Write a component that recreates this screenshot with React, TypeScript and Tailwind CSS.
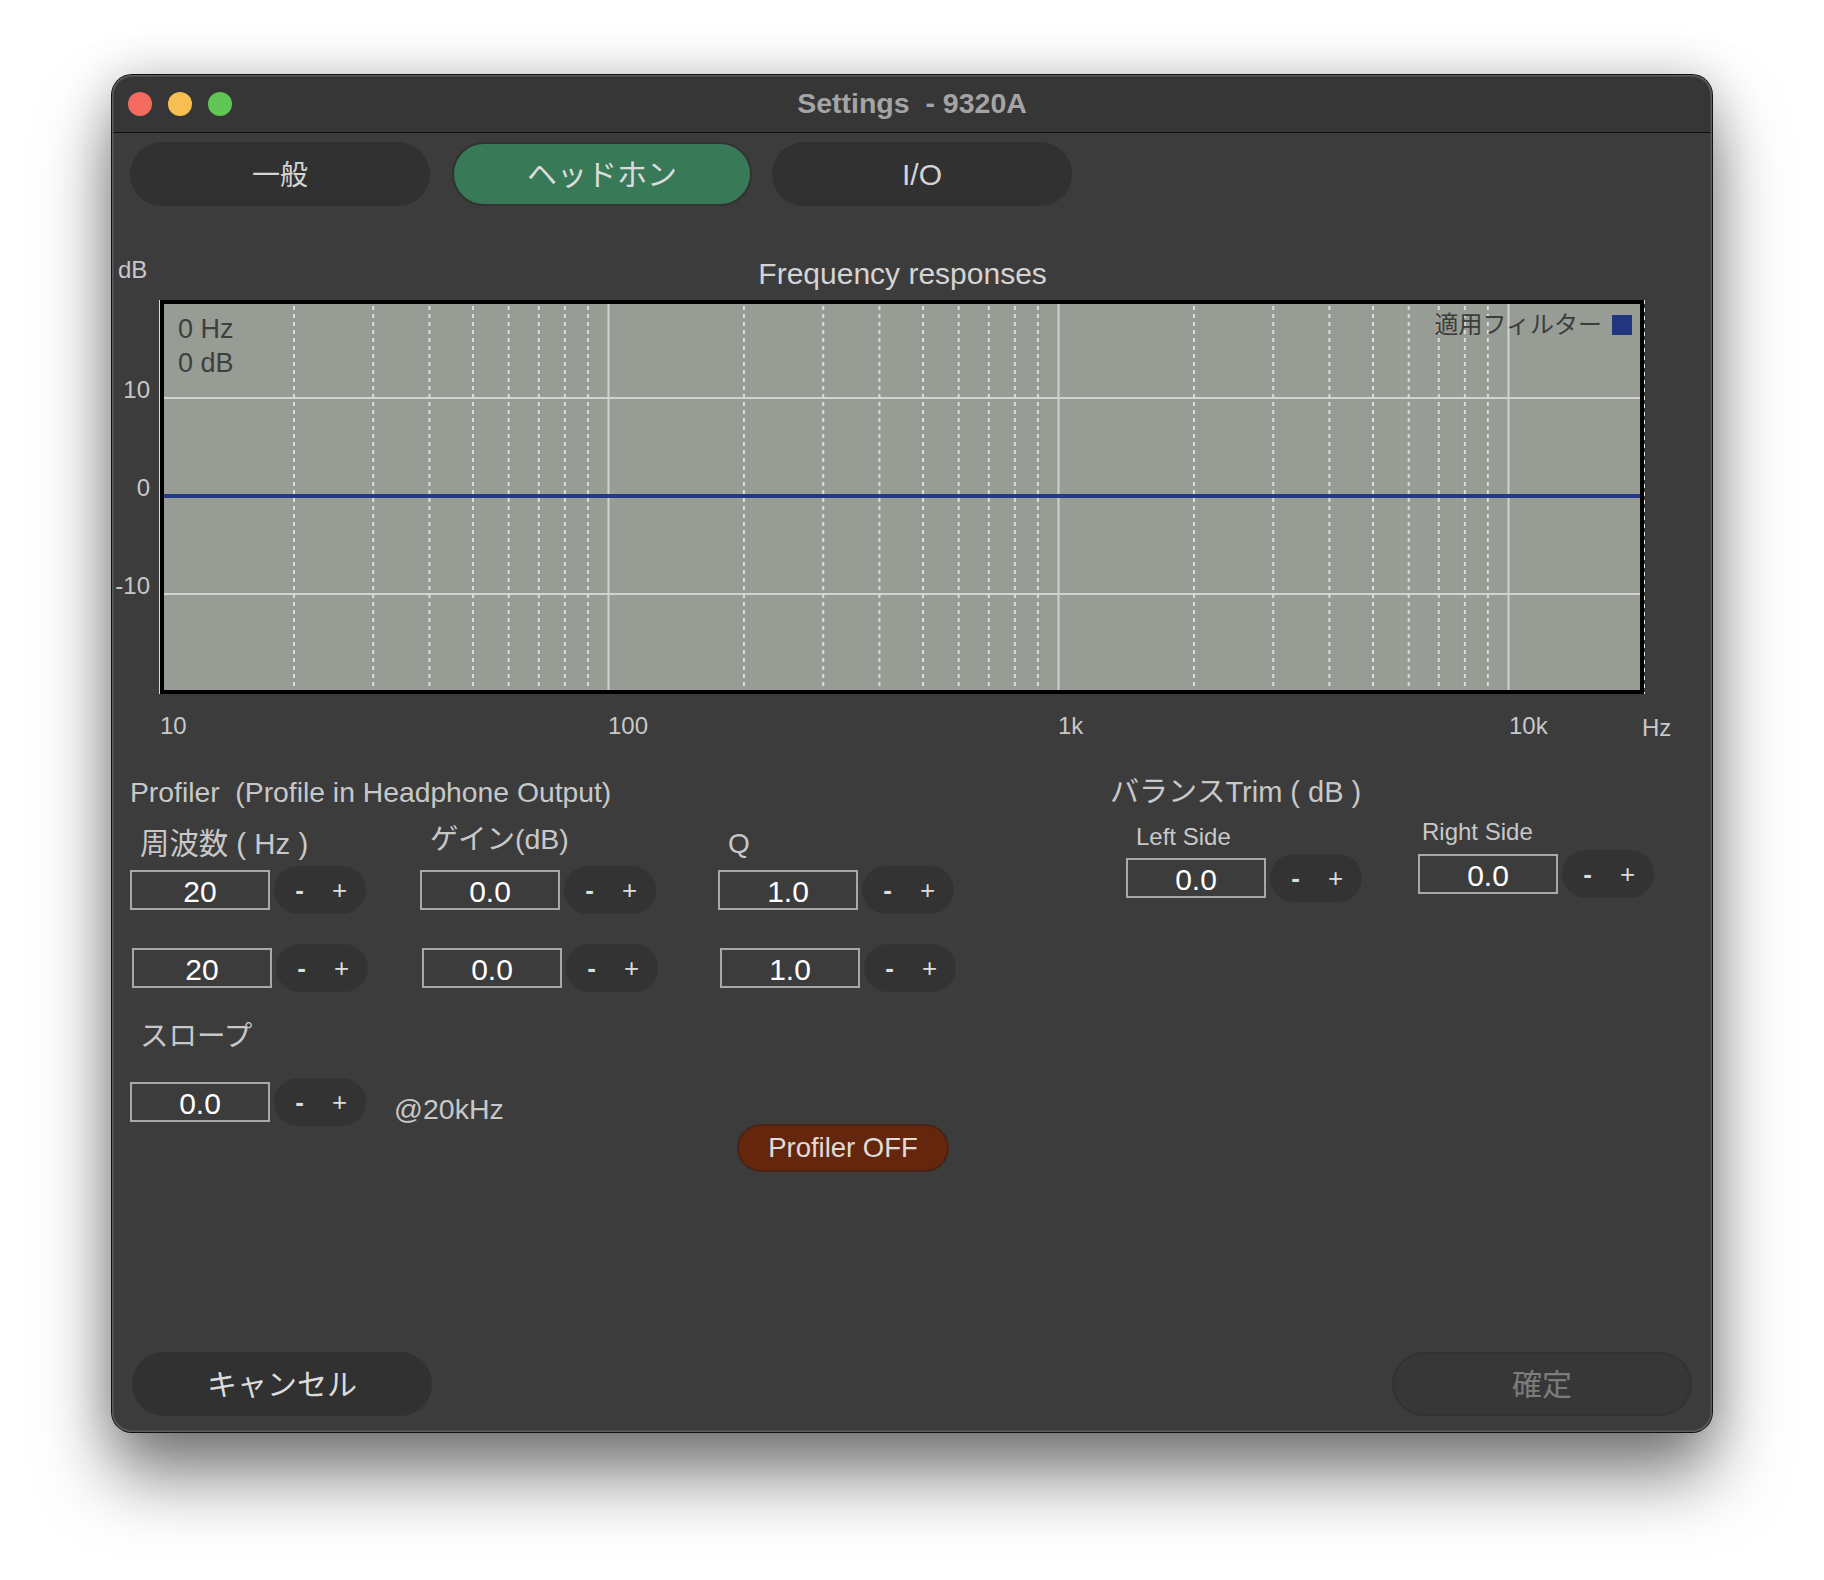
const font = { fontFamily: '"Liberation Sans", "Noto Sans CJK JP", sans-serif' };

const xLines: { x: number; solid: boolean }[] = [];
for (let d = 0; d < 4; d++) {
  for (let n = 1; n < 10; n++) {
    if (d === 3 && n > 2) break;
    xLines.push({ x: -5.5 + d * 450 + Math.log10(n) * 450, solid: n === 1 });
  }
}

function Stepper() {
  return (
    <div className="flex h-[48px] w-[92px] items-center justify-center rounded-full bg-[#333333] pr-[1px] text-[26px] text-[#dddddd]">
      <span className="w-[40px] text-center font-bold">-</span>
      <span className="w-[40px] text-center">+</span>
    </div>
  );
}

function Field({ value, className = "" }: { value: string; className?: string }) {
  return (
    <div className={`flex h-[48px] items-center gap-[4px] ${className}`}>
      <div className="flex h-[40px] w-[140px] items-center justify-center border-2 border-[#a8a8a8] pt-[2px] text-[30px] text-white">
        {value}
      </div>
      <Stepper />
    </div>
  );
}

function Pill({ label, className }: { label: string; className: string }) {
  return (
    <div className={`flex h-[64px] w-[300px] items-center justify-center rounded-full ${className}`}>
      {label}
    </div>
  );
}

function AxisLabel({ className, children }: { className: string; children: string }) {
  return <span className={`absolute text-[24px] leading-[28px] text-[#c8c8c8] ${className}`}>{children}</span>;
}

function Chart() {
  return (
    <div className="relative ml-[48px] h-[394px] w-[1484px]">
      <AxisLabel className="left-[-56px] top-[76px] w-[46px] text-right">10</AxisLabel>
      <AxisLabel className="left-[-56px] top-[174px] w-[46px] text-right">0</AxisLabel>
      <AxisLabel className="left-[-56px] top-[272px] w-[46px] text-right">-10</AxisLabel>
      <AxisLabel className="left-[0px] top-[412px]">10</AxisLabel>
      <AxisLabel className="left-[448px] top-[412px]">100</AxisLabel>
      <AxisLabel className="left-[898px] top-[412px]">1k</AxisLabel>
      <AxisLabel className="left-[1349px] top-[412px]">10k</AxisLabel>
      <AxisLabel className="left-[1482px] top-[414px]">Hz</AxisLabel>
      <div className="relative h-full w-full border-4 border-black bg-[#979d94]">
        <svg className="absolute left-0 top-0 overflow-visible" width="1476" height="386">
          {[94, 192, 290].map((y) => (
            <line key={y} x1="0" x2="1476" y1={y} y2={y} stroke="#d2d2d0" strokeWidth="2" />
          ))}
          {xLines.map(({ x, solid }) => {
            if (solid) {
              return x < 0 ? null : <line key={x} x1={x} x2={x} y1="0" y2="386" stroke="#d2d2d0" strokeWidth="2" />;
            }
            if (x > 1476) {
              return (
                <line key={x} x1="1480.5" x2="1480.5" y1="-4" y2="390" stroke="#e4e4e2" strokeWidth="1" strokeDasharray="4 4" />
              );
            }
            return <line key={x} x1={x} x2={x} y1="2" y2="386" stroke="#dcdcda" strokeWidth="2" strokeDasharray="4 4" />;
          })}
          <rect x="0" y="190" width="1476" height="4" fill="#26388a" />
          <line x1="-4.5" x2="-4.5" y1="-4" y2="390" stroke="#d8d8d8" strokeWidth="1" />
        </svg>
        <div className="absolute left-[14px] top-[8px] text-[27px] leading-[34px] text-[#3f3f3f]">
          <div>0 Hz</div>
          <div>0 dB</div>
        </div>
        <div className="absolute right-[8px] top-[10px] flex items-center gap-[10px] text-[24px] leading-[20px] text-[#3c3c3c]">
          <span className="pt-[1px]">適用フィルター</span>
          <div className="h-[20px] w-[20px] bg-[#22357f]" />
        </div>
      </div>
    </div>
  );
}

export default function App() {
  return (
    <div className="h-[1580px] w-[1824px] overflow-hidden bg-white pl-[112px] pt-[75px]" style={font}>
      <div className="relative flex h-[1357px] w-[1600px] flex-col rounded-[20px] bg-[#3c3c3c] shadow-[0_0_0_1px_#111111,0_44px_70px_rgba(0,0,0,0.5),0_0_50px_rgba(0,0,0,0.2)]">
        <div className="flex h-[58px] shrink-0 items-center rounded-t-[20px] border-b border-[#111111] bg-[#363636] pl-[16px]">
          <div className="flex gap-[16px]">
            <div className="h-[24px] w-[24px] rounded-full bg-[#f26b5e]" />
            <div className="h-[24px] w-[24px] rounded-full bg-[#f6bf4f]" />
            <div className="h-[24px] w-[24px] rounded-full bg-[#62c655]" />
          </div>
          <div className="ml-[280px] w-[800px] text-center text-[28.5px] font-bold text-[#a4a4a4]">Settings&nbsp; - 9320A</div>
        </div>

        <div className="flex shrink-0 pl-[18px] pt-[9px]">
          <Pill label="一般" className="bg-[#313131] pt-[3px] text-[28px] text-[#d4d4d4]" />
          <Pill label="ヘッドホン" className="ml-[22px] w-[298px] border-2 border-[#323232] bg-[#387a57] text-[30px] text-[#dcdcdc]" />
          <Pill label="I/O" className="ml-[20px] bg-[#313131] text-[30px] text-[#d4d4d4]" />
        </div>

        <div className="flex h-[94px] shrink-0 items-end pb-[9px]">
          <span className="ml-[6px] pb-[4px] text-[24px] leading-[34px] text-[#c8c8c8]">dB</span>
          <span className="ml-[611px] text-[30px] leading-[34px] text-[#d4d4d4]">Frequency responses</span>
        </div>

        <Chart />

        <div className="mt-[78px] flex text-[#c8c8c8]">
          <div className="w-[998px] shrink-0 pl-[18px]">
            <div className="h-[40px] text-[28.3px] leading-[40px]">Profiler&nbsp; (Profile in Headphone Output)</div>
            <div className="grid grid-cols-[290px_298px_240px]">
              <div>
                <div className="ml-[10px] mt-[15px] h-[39px] text-[29.4px] leading-[34px]">周波数 ( Hz )</div>
                <Field value="20" />
                <Field value="20" className="ml-[2px] mt-[30px]" />
              </div>
              <div>
                <div className="ml-[10px] mt-[10px] h-[44px] text-[28.5px] leading-[34px]">ゲイン(dB)</div>
                <Field value="0.0" />
                <Field value="0.0" className="ml-[2px] mt-[30px]" />
              </div>
              <div>
                <div className="ml-[10px] mt-[15px] h-[39px] text-[28px] leading-[34px]">Q</div>
                <Field value="1.0" />
                <Field value="1.0" className="ml-[2px] mt-[30px]" />
              </div>
            </div>
            <div className="ml-[10px] mt-[27px] h-[32px] text-[28.5px] leading-[34px]">スロープ</div>
            <div className="mt-[27px] flex items-start">
              <Field value="0.0" />
              <div className="ml-[28px] mt-[14px] w-[110px] text-[28.5px] leading-[34px]">@20kHz</div>
              <div className="ml-[233px] mt-[46px] flex h-[48px] w-[212px] items-center justify-center rounded-full border-2 border-[#482316] bg-[#65260e] text-[27.5px] text-[#e0dcd8]">
                Profiler OFF
              </div>
            </div>
          </div>
          <div className="flex-1">
            <div className="h-[40px] text-[29px] leading-[40px]">バランスTrim ( dB )</div>
            <div className="ml-[16px] flex gap-[56px]">
              <div>
                <div className="ml-[10px] mt-[10px] h-[30px] text-[24px] leading-[30px]">Left Side</div>
                <Field value="0.0" className="mt-[2px]" />
              </div>
              <div>
                <div className="ml-[4px] mt-[5px] h-[30px] text-[24px] leading-[30px]">Right Side</div>
                <Field value="0.0" className="mt-[3px]" />
              </div>
            </div>
          </div>
        </div>

        <div className="mt-auto flex justify-between px-[20px] pb-[16px]">
          <Pill label="キャンセル" className="bg-[#313131] text-[30px] text-[#dcdcdc]" />
          <Pill label="確定" className="border-2 border-[#323232] bg-[#373737] text-[30px] text-[#7c7c7c]" />
        </div>

        <div className="pointer-events-none absolute inset-0 rounded-[20px] shadow-[inset_0_0_0_1.5px_#5c5c5c]" />
      </div>
    </div>
  );
}
